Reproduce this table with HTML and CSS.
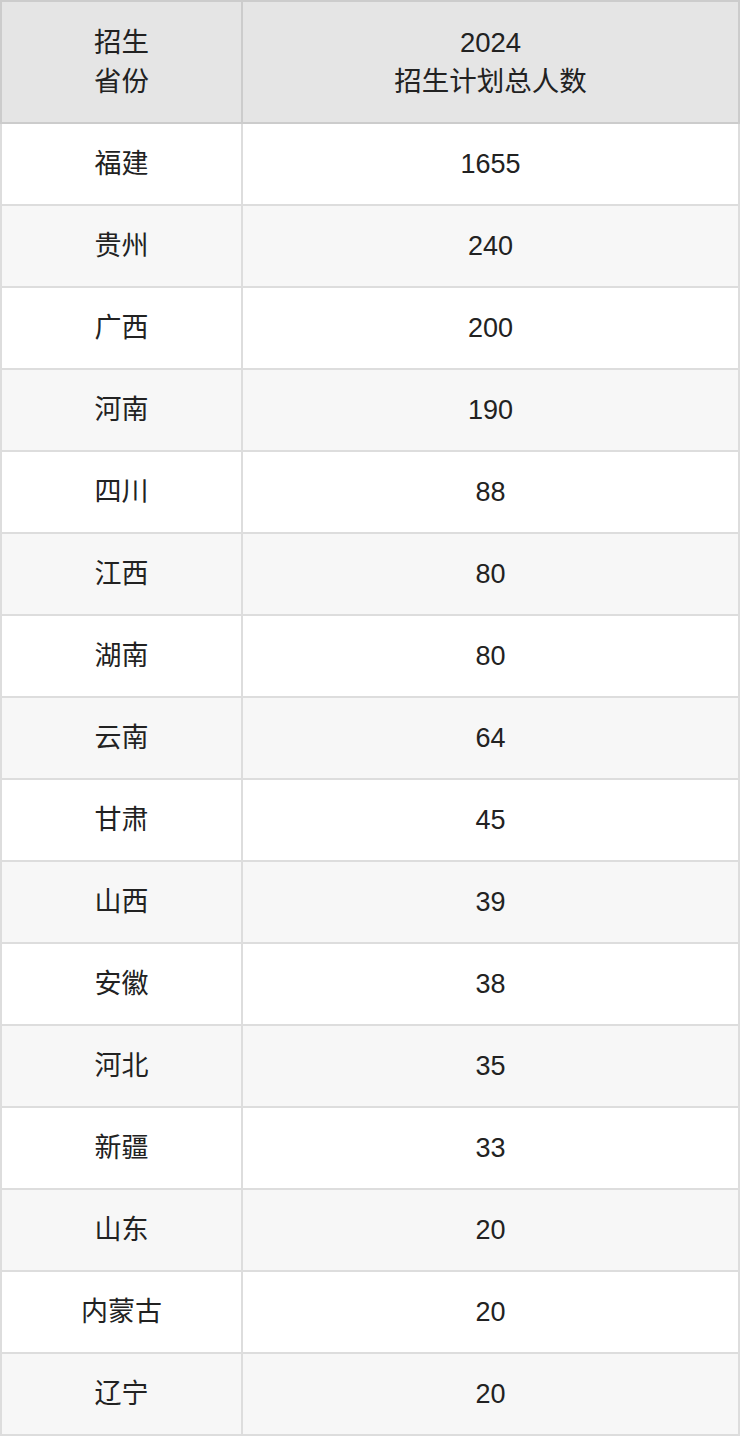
FILE: index.html
```html
<!DOCTYPE html>
<html lang="zh">
<head>
<meta charset="utf-8">
<link rel="stylesheet" href="styles.css">
</head>
<body>
<table class="plan">
  <thead>
    <tr><th class="c1">招生<br>省份</th><th class="c2">2024<br>招生计划总人数</th></tr>
  </thead>
  <tbody>
    <tr><td>福建</td><td>1655</td></tr>
    <tr><td>贵州</td><td>240</td></tr>
    <tr><td>广西</td><td>200</td></tr>
    <tr><td>河南</td><td>190</td></tr>
    <tr><td>四川</td><td>88</td></tr>
    <tr><td>江西</td><td>80</td></tr>
    <tr><td>湖南</td><td>80</td></tr>
    <tr><td>云南</td><td>64</td></tr>
    <tr><td>甘肃</td><td>45</td></tr>
    <tr><td>山西</td><td>39</td></tr>
    <tr><td>安徽</td><td>38</td></tr>
    <tr><td>河北</td><td>35</td></tr>
    <tr><td>新疆</td><td>33</td></tr>
    <tr><td>山东</td><td>20</td></tr>
    <tr><td>内蒙古</td><td>20</td></tr>
    <tr><td>辽宁</td><td>20</td></tr>
  </tbody>
</table>
</body>
</html>
```

FILE: styles.css
```css
html, body {
  margin: 0;
  padding: 0;
  background: #ffffff;
}
.plan {
  border-collapse: collapse;
  width: 740px;
  table-layout: fixed;
  font-family: "Liberation Sans", "Noto Sans CJK SC", sans-serif;
  font-size: 27px;
  color: #222222;
}
.plan th, .plan td {
  text-align: center;
  vertical-align: middle;
  padding: 0;
  font-weight: normal;
}
.plan th {
  background: #e5e5e5;
  border: 2px solid #cccccc;
  height: 120px;
  font-size: 27.5px;
  line-height: 39px;
}
.plan td {
  border: 2px solid #dddddd;
  height: 80px;
  line-height: 30px;
}
.plan .c1 { width: 239px; }
.plan tbody tr:nth-child(even) td { background: #f7f7f7; }
.plan tbody tr:nth-child(odd) td { background: #ffffff; }
```
